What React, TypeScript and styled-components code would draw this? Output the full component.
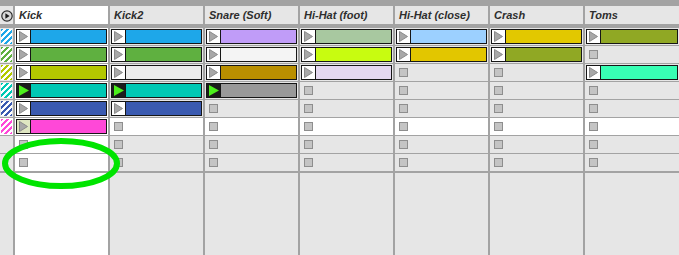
import React from 'react';
import styled, { createGlobalStyle } from 'styled-components';

const Global = createGlobalStyle`
  html, body { margin: 0; padding: 0; background: #e6e6e6; }
  body { font-family: "Liberation Sans", Arial, sans-serif; }
  #root { width: 679px; height: 255px; }
`;

const COLS = '13px repeat(6, 93px) 1fr';

type ClipData = { color: string; playing?: boolean; selected?: boolean } | null;

const tracks = ['Kick', 'Kick2', 'Snare (Soft)', 'Hi-Hat (foot)', 'Hi-Hat (close)', 'Crash', 'Toms'];
const sceneColors: (string | null)[] = ['#1ea7e9', '#5fb040', '#b3c800', '#00c8b4', '#3a5ab0', '#ff48d8', null, null];

const c = (color: string, extra: Partial<{ playing: boolean; selected: boolean }> = {}): ClipData => ({ color, ...extra });

const clips: ClipData[][] = [
  [c('#1ea7e9'), c('#1ea7e9'), c('#c09cf8'), c('#a8c8a0'), c('#9cd0ff'), c('#e2c800'), c('#90a824')],
  [c('#5fb040'), c('#5fb040'), c('#f4f4f4'), c('#c8fc10'), c('#e2c600'), c('#90a824'), null],
  [c('#b3c800'), c('#ececec'), c('#b98f00'), c('#e4d8f0'), null, null, c('#38ffb4')],
  [c('#00c8b4', { playing: true }), c('#00c8b4', { playing: true }), c('#999999', { playing: true }), null, null, null, null],
  [c('#3a5ab0'), c('#3a5ab0'), null, null, null, null, null],
  [c('#ff48d8', { selected: true }), null, null, null, null, null, null],
  [null, null, null, null, null, null, null],
  [null, null, null, null, null, null, null],
];

const SELECTED_TRACK = 0;
const SELECTED_SCENE = 5;

const Frame = styled.div`
  position: relative;
  width: 679px;
  height: 255px;
  overflow: hidden;
  box-sizing: border-box;
  padding-top: 6px;
  background: #a3a3a3;
  display: flex;
  flex-direction: column;
`;

const GridRow = styled.div<{ $height?: number; $gapBelow: number; $grow?: boolean }>`
  display: grid;
  grid-template-columns: ${COLS};
  column-gap: 2px;
  height: ${p => (p.$height ? `${p.$height}px` : 'auto')};
  flex: ${p => (p.$grow ? '1' : 'none')};
  margin-bottom: ${p => p.$gapBelow}px;
`;

const HeaderCell = styled.div<{ $active?: boolean }>`
  background: ${p => (p.$active ? '#ffffff' : '#e6e6e6')};
  display: flex;
  align-items: center;
  padding-left: 4px;
  font-size: 11px;
  font-weight: bold;
  font-style: italic;
  color: #2e2e2e;
  white-space: nowrap;
  overflow: hidden;
`;

const CornerCell = styled.div`
  background: #e6e6e6;
  display: flex;
  align-items: center;
  justify-content: center;
  padding-top: 1px;
`;

const SlotCell = styled.div<{ $white?: boolean }>`
  background: ${p => (p.$white ? '#ffffff' : '#e6e6e6')};
  display: flex;
  align-items: stretch;
`;

const SceneCell = styled.div<{ $white?: boolean }>`
  background: ${p => (p.$white ? '#ffffff' : '#e6e6e6')};
  display: flex;
  align-items: stretch;
`;

const SceneSwatch = styled.div<{ $color: string }>`
  flex: 1;
  margin: 1px;
  background: repeating-linear-gradient(
    135deg,
    ${p => p.$color} 0 2.1px,
    #ffffff 2.1px 4.2px
  );
`;

const Clip = styled.div<{ $color: string }>`
  flex: 1;
  margin: 1px;
  display: flex;
  border: 1px solid #161616;
  background: ${p => p.$color};
`;

const Launch = styled.div<{ $state: 'idle' | 'playing' | 'selected' }>`
  width: 13px;
  border-right: 1px solid #161616;
  background: ${p => (p.$state === 'playing' ? '#1c1c1c' : p.$state === 'selected' ? '#dfe6c2' : '#ffffff')};
  display: flex;
  align-items: center;
  justify-content: center;
`;

const EmptySlot = styled.div`
  width: 7px;
  height: 7px;
  margin: 4px 0 0 4px;
  background: #c4c4c4;
  border: 1px solid #8e8e8e;
`;

const Overlay = styled.svg`
  position: absolute;
  left: 0;
  top: 0;
  pointer-events: none;
`;

const PlayTriangle = ({ playing }: { playing?: boolean }) =>
  playing ? (
    <svg width="10" height="11" viewBox="0 0 10 11">
      <polygon points="0,0 10,5.5 0,11" fill="#4cf01c" />
    </svg>
  ) : (
    <svg width="9" height="11" viewBox="0 0 9 11">
      <polygon points="0.5,0.5 8.5,5.5 0.5,10.5" fill="#a8a8a8" stroke="#8a8a8a" strokeWidth="1" />
    </svg>
  );

const PlayCircle = () => (
  <svg width="12" height="12" viewBox="0 0 12 12">
    <circle cx="6" cy="6" r="5.2" fill="#d8d8d8" stroke="#2a2a2a" strokeWidth="1.2" />
    <polygon points="4.4,3.3 8.6,6 4.4,8.7" fill="#1a1a1a" />
  </svg>
);

export default function App() {
  return (
    <>
      <Global />
      <Frame>
        <GridRow $height={18} $gapBelow={4}>
          <CornerCell>
            <PlayCircle />
          </CornerCell>
          {tracks.map((t, i) => (
            <HeaderCell key={t} $active={i === SELECTED_TRACK}>
              {t}
            </HeaderCell>
          ))}
        </GridRow>
        {clips.map((row, r) => (
          <GridRow key={r} $height={17} $gapBelow={r === clips.length - 1 ? 2 : 1}>
            <SceneCell $white={r === SELECTED_SCENE}>
              {sceneColors[r] && <SceneSwatch $color={sceneColors[r] as string} />}
            </SceneCell>
            {row.map((clip, i) => (
              <SlotCell key={i} $white={r === SELECTED_SCENE || i === SELECTED_TRACK}>
                {clip ? (
                  <Clip $color={clip.color}>
                    <Launch $state={clip.playing ? 'playing' : clip.selected ? 'selected' : 'idle'}>
                      <PlayTriangle playing={clip.playing} />
                    </Launch>
                  </Clip>
                ) : (
                  <EmptySlot />
                )}
              </SlotCell>
            ))}
          </GridRow>
        ))}
        <GridRow $gapBelow={0} $grow>
          <SceneCell />
          {tracks.map((t, i) => (
            <SlotCell key={t} $white={i === SELECTED_TRACK} />
          ))}
        </GridRow>
        <Overlay width="679" height="255" viewBox="0 0 679 255">
          <ellipse cx="61" cy="163.5" rx="56" ry="22.5" fill="none" stroke="#00e400" strokeWidth="6" />
        </Overlay>
      </Frame>
    </>
  );
}
